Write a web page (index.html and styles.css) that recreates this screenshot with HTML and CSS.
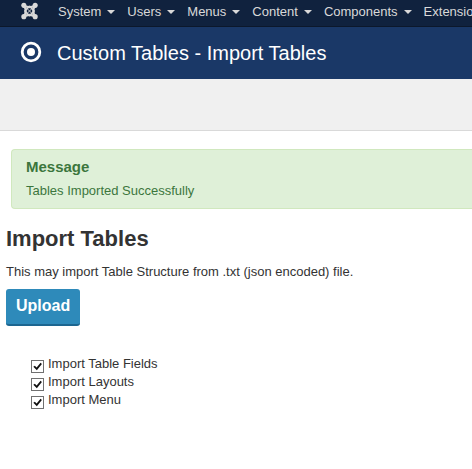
FILE: index.html
```html
<!DOCTYPE html>
<html lang="en">
<head>
<meta charset="utf-8">
<title>Custom Tables - Import Tables</title>
<link rel="stylesheet" href="styles.css">
</head>
<body>
<nav class="navbar">
  <a class="brand" href="#" aria-label="Joomla">
    <svg width="17" height="18" viewBox="0 0 18 18" fill="none" stroke="#d9d9d9" stroke-linejoin="round">
      <path stroke-width="2.400" d="M3 3Q9 7 15 3Q11 9 15 15Q9 11 3 15Q7 9 3 3Z"/>
      <path stroke-width="1.600" d="M4 9L9 4L14 9L9 14Z"/>
      <path stroke-width="1" d="M6 6L12 12M12 6L6 12"/>
      <g fill="#d9d9d9" stroke="none"><circle cx="3" cy="3" r="2.700"/><circle cx="15" cy="3" r="2.700"/><circle cx="3" cy="15" r="2.700"/><circle cx="15" cy="15" r="2.700"/></g>
    </svg>
  </a>
  <ul class="menu">
    <li><a href="#">System<span class="caret"></span></a></li>
    <li><a href="#">Users<span class="caret"></span></a></li>
    <li><a href="#">Menus<span class="caret"></span></a></li>
    <li><a href="#">Content<span class="caret"></span></a></li>
    <li><a href="#">Components<span class="caret"></span></a></li>
    <li><a href="#">Extensions<span class="caret"></span></a></li>
  </ul>
</nav>
<header class="header">
  <svg width="22" height="22" viewBox="0 0 22 22" aria-hidden="true">
    <circle cx="11" cy="10" r="8.800" fill="none" stroke="#fff" stroke-width="2.800"/>
    <circle cx="11" cy="10" r="4" fill="#fff"/>
  </svg>
  <h1>Custom Tables - Import Tables</h1>
</header>
<div class="subhead"></div>
<main class="content">
  <section class="alert">
    <h4>Message</h4>
    <p>Tables Imported Successfully</p>
  </section>
  <h2>Import Tables</h2>
  <p class="intro">This may import Table Structure from .txt (json encoded) file.</p>
  <form class="import">
    <button class="upload" type="button">Upload</button>
    <div class="options">
      <label><input type="checkbox" checked>Import Table Fields</label>
      <label><input type="checkbox" checked>Import Layouts</label>
      <label><input type="checkbox" checked>Import Menu</label>
    </div>
  </form>
</main>
</body>
</html>
```
FILE: styles.css
```css
* {
  box-sizing: border-box;
}

body {
  margin: 0;
  background: #fff;
  color: #333;
  font: 13px/18px "Liberation Sans", Arial, sans-serif;
}

h1, h2, h4, p, ul {
  margin: 0;
}

.navbar {
  display: flex;
  gap: 20px;
  height: 27px;
  padding-left: 21px;
  overflow: hidden;
  background: #10223e;
  border-bottom: 1px solid #0c182b;
}

.brand {
  flex: none;
  padding-top: 2px;
}

.brand svg,
.header svg {
  display: block;
  flex: none;
  overflow: visible;
}

.menu {
  display: flex;
  gap: 12px;
  padding: 3px 0 0;
  list-style: none;
}

.menu a {
  display: flex;
  align-items: center;
  gap: 6px;
  color: #d9d9d9;
  text-decoration: none;
}

.caret {
  border: 4px solid transparent;
  border-top-color: #d9d9d9;
  border-bottom: 0;
}

.header {
  display: flex;
  align-items: center;
  gap: 15px;
  height: 52px;
  padding-left: 20px;
  background: #1a3867;
  color: #fff;
}

.header h1 {
  font-size: 20px;
  font-weight: normal;
  line-height: 24px;
  white-space: nowrap;
}

.subhead {
  height: 52px;
  background: #f0f0f0;
  border-bottom: 1px solid #d9d9d9;
}

.content {
  padding: 18px 0 0 6px;
}

.alert {
  margin-left: 5px;
  padding: 8px 14px;
  background: #dff0d8;
  border: 1px solid #d0e8be;
  border-right: 0;
  border-radius: 4px 0 0 4px;
  color: #3c763d;
}

.alert h4 {
  margin-bottom: 6px;
  font-size: 15px;
  line-height: 18px;
}

h2 {
  margin-top: 12px;
  font-size: 22px;
  line-height: 36px;
}

.intro {
  margin-top: 6px;
}

.upload {
  display: block;
  height: 37px;
  margin-top: 8px;
  padding: 0 10px 2px;
  background: #2e8aba;
  border: 0;
  border-bottom: 2px solid #1c6690;
  border-radius: 3px;
  color: #fff;
  font: bold 16px/20px "Liberation Sans", Arial, sans-serif;
}

.options {
  display: grid;
  justify-items: start;
  margin: 29px 0 0 25px;
}

.options label {
  display: flex;
  align-items: flex-start;
  gap: 4px;
}

.options input {
  appearance: none;
  width: 13px;
  height: 13px;
  margin: 5px 0 0;
  background: #fff;
  border: 1px solid #707070;
}

.options input:checked::before {
  content: "";
  display: block;
  width: 11px;
  height: 11px;
  background: #111;
  clip-path: polygon(12% 52%, 26% 44%, 42% 60%, 78% 17%, 90% 28%, 44% 84%);
}
```
